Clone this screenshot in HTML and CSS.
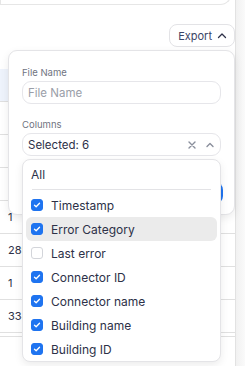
FILE: index.html
```html
<!DOCTYPE html>
<html lang="en">
<head>
  <meta charset="UTF-8" />
  <title>Error Log Export</title>
  <link rel="stylesheet" href="styles.css">
</head>
<body>
  <div class="page">
    <div class="content">
      <div class="top-card"></div>
      <div class="toolbar">
        <button class="export-btn">Export
          <svg width="12" height="12" viewBox="0 0 12 12"><path d="M2.5 7.5 6 4l3.5 3.5" fill="none" stroke="#2d3148" stroke-width="1.3" stroke-linecap="round" stroke-linejoin="round"/></svg>
        </button>
      </div>

      <div class="table">
        <div class="row head"></div>
        <div class="row"></div>
        <div class="row"></div>
        <div class="row"></div>
        <div class="row"><span>1</span></div>
        <div class="row"><span>289</span></div>
        <div class="row"><span>1</span></div>
        <div class="row"><span>334</span></div>
        <div class="row foot"></div>
      </div>

      <div class="export-panel">
        <label class="field-label">File Name</label>
        <div class="input">File Name</div>

        <label class="field-label">Columns</label>
        <div class="input select">
          <span class="value">Selected: 6</span>
          <svg width="10" height="10" viewBox="0 0 10 10"><path d="M2 2l6 6M8 2 2 8" stroke="#8a8f9c" stroke-width="1.4" stroke-linecap="round"/></svg>
          <svg width="10" height="10" viewBox="0 0 10 10"><path d="M2 6.5 5 3.5l3 3" fill="none" stroke="#8a8f9c" stroke-width="1.4" stroke-linecap="round" stroke-linejoin="round"/></svg>
        </div>

        <div class="panel-actions">
          <button class="primary-btn">Download</button>
        </div>
      </div>

      <div class="column-list" id="columnList"></div>
    </div>
    <div class="scroll-strip"></div>
  </div>

  <script>
    const columns = [
      { name: "Timestamp", checked: true },
      { name: "Error Category", checked: true, hover: true },
      { name: "Last error", checked: false },
      { name: "Connector ID", checked: true },
      { name: "Connector name", checked: true },
      { name: "Building name", checked: true },
      { name: "Building ID", checked: true },
    ];

    const check = `<svg width="12" height="12" viewBox="0 0 12 12"><path d="M3 6.2 5 8.1 9 3.9" fill="none" stroke="#fff" stroke-width="1.6" stroke-linecap="round" stroke-linejoin="round"/></svg>`;

    function renderColumns() {
      const list = document.getElementById("columnList");
      list.innerHTML = `<div class="option all">All</div><div class="divider"></div>`;
      columns.forEach(c => {
        list.innerHTML += `<div class="option${c.hover ? " hover" : ""}">
          <span class="box${c.checked ? " on" : ""}">${c.checked ? check : ""}</span>
          <span>${c.name}</span>
        </div>`;
      });
    }

    renderColumns();
  </script>
</body>
</html>
```

FILE: styles.css
```css
body {
  margin: 0;
  font-family: Inter, "Noto Sans", sans-serif;
  background-color: #fff;
  color: #2d3148;
  overflow: hidden;
}

.page {
  display: flex;
  height: 366px;
}

.content {
  position: relative;
  flex: 1;
  border-right: 1px solid #e2e2e2;
}

.scroll-strip {
  width: 9px;
  background: linear-gradient(to right, #f1f1f1, #fafafa);
}

.top-card {
  height: 40px;
  margin-top: -36px;
  margin-right: 3px;
  border: 1px solid #e6e6e6;
  border-top: none;
  border-radius: 0 0 12px 0;
}

.toolbar {
  display: flex;
  justify-content: flex-end;
  margin-top: 19px;
}

.export-btn {
  display: flex;
  align-items: center;
  gap: 4px;
  height: 23px;
  padding: 0 6px 0 8px;
  border: 1px solid #e3e3e6;
  border-radius: 8px;
  background: #fff;
  font-family: inherit;
  font-size: 11px;
  color: #3b4566;
}

.table {
  margin-top: 22px;
}

.row {
  height: 32px;
  border-bottom: 1px solid #e0e0e0;
  display: flex;
  align-items: center;
  padding-left: 8px;
  font-size: 11px;
  color: #2d3148;
}

.row.head {
  height: 32px;
  background: #eef3fc;
}

.row.foot {
  height: 3px;
}

.export-panel {
  position: absolute;
  top: 50px;
  left: 8px;
  right: 0;
  height: 165px;
  box-sizing: border-box;
  padding: 16px 13px 0;
  background: #fff;
  border: 1px solid #e4e4e7;
  border-radius: 9px;
  box-shadow: 0 3px 8px rgba(0, 0, 0, 0.08);
}

.field-label {
  display: block;
  font-size: 9.5px;
  color: #70747f;
  margin-bottom: 3px;
}

.input {
  display: flex;
  align-items: center;
  height: 23px;
  box-sizing: border-box;
  padding: 0 5px;
  border: 1px solid #e6e6ea;
  border-radius: 9px;
  font-size: 11.5px;
  color: #9a9ea8;
  margin-bottom: 15px;
}

.select {
  gap: 8px;
  margin-bottom: 0;
}

.select .value {
  flex: 1;
  color: #2d3148;
}

.panel-actions {
  display: flex;
  justify-content: flex-end;
  margin: 26px -2px 0 0;
}

.primary-btn {
  height: 22px;
  padding: 0 12px;
  border: none;
  border-radius: 8px;
  background: #1f74f0;
  color: #fff;
  font-family: inherit;
  font-size: 11px;
}

.column-list {
  position: absolute;
  top: 159px;
  left: 22px;
  width: 199px;
  height: 203px;
  box-sizing: border-box;
  padding: 2px 3px 0;
  background: #fff;
  border: 1px solid #e4e4e7;
  border-radius: 8px;
  box-shadow: 0 3px 8px rgba(0, 0, 0, 0.08);
  overflow: hidden;
}

.option {
  display: flex;
  align-items: center;
  gap: 8px;
  height: 24px;
  padding-left: 5px;
  border-radius: 6px;
  font-size: 12px;
  color: #2d3148;
}

.option.hover {
  background: #ebebeb;
}

.divider {
  height: 1px;
  margin: 3px 6px 3px 6px;
  background: #e3e3e6;
}

.box {
  display: flex;
  align-items: center;
  justify-content: center;
  width: 12px;
  height: 12px;
  box-sizing: border-box;
  border: 1px solid #d3d5da;
  border-radius: 3px;
  background: #fff;
}

.box.on {
  border-color: #1f74f0;
  background: #1f74f0;
}
```
